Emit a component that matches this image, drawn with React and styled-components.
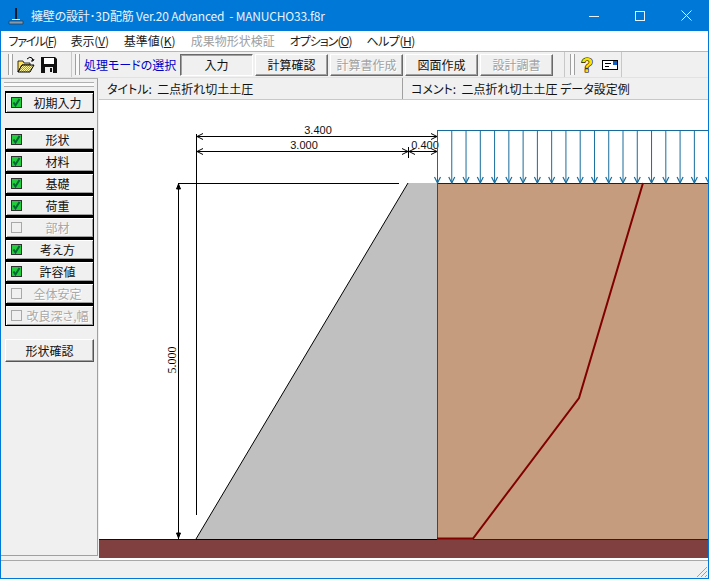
import React from 'react';
import styled, { createGlobalStyle } from 'styled-components';

const Global = createGlobalStyle`
  html, body { margin: 0; padding: 0; background: #f0f0f0; overflow: hidden; }
  #root { height: 100vh; }
  * { box-sizing: border-box; }
`;
const FONT = `"Noto Sans CJK JP", "Liberation Sans", sans-serif`;

const Window = styled.div`
  height: 579px; display: flex; flex-direction: column;
  border: 1px solid #0078d7; border-top: none;
  background: #f0f0f0; font-family: ${FONT}; font-size: 12px; color: #111;
  font-feature-settings: "palt";
`;
const TitleBar = styled.div`
  height: 31px; margin: 0 -1px; background: #0078d7; color: #e8f2fb;
  display: flex; align-items: center; padding-left: 8px; flex: none;
`;
const TitleText = styled.div`
  margin-left: 7px; font-size: 12px; white-space: nowrap; flex: 1; letter-spacing: -0.2px;
`;
const WinButton = styled.div`
  width: 46px; height: 31px; display: flex; align-items: center; justify-content: center;
`;
const MenuBar = styled.div`
  height: 20px; background: #fff; display: flex; align-items: center; flex: none; padding-bottom: 1px;
`;
const MenuItem = styled.span`
  padding: 0 7.5px; font-size: 12px; white-space: nowrap;
  letter-spacing: ${p => p.$ls || 0}px;
  color: ${p => (p.$off ? '#a0a0a0' : '#222')};
  u { text-underline-offset: 1px; }
`;
const ToolRow = styled.div`
  height: 27px; flex: none; display: flex; align-items: stretch;
  border-top: 1px solid #b8b8b8; border-bottom: 1px solid #e2e2e2;
`;
const ToolGroup = styled.div`
  display: flex; align-items: center; height: 25px; background: #f0f0f0;
  width: ${p => p.$w}px; margin-left: ${p => p.$ml || 0}px; padding-left: ${p => p.$pl || 0}px;
  border-right: 1px solid #c8c8c8;
`;
const Gripper = styled.div`
  width: 5px; height: 21px; flex: none;
  border-left: 1px solid #a0a0a0; border-right: 1px solid #a0a0a0;
  background: #fafafa;
  margin-right: ${p => p.$mr}px;
`;
const IconGap = styled.span`
  width: ${p => p.$w}px; flex: none;
`;
const ModeLabel = styled.span`
  color: #0000c8; font-size: 12px; white-space: nowrap; width: 96px; flex: none;
`;
const ModeButton = styled.div`
  width: 73px; height: 22px; margin-right: 2px; flex: none;
  display: flex; align-items: center; justify-content: center;
  font-size: 12px; background: #f0f0f0;
  color: ${p => (p.$off ? '#a0a0a0' : '#111')};
  ${p => p.$off && 'text-shadow: 1px 1px 0 #fff;'}
  border-style: solid; border-width: 1px;
  border-color: ${p => (p.$down ? '#696969 #fff #fff #696969' : '#fff #696969 #696969 #fff')};
  box-shadow: ${p => (p.$down ? 'inset 1px 1px 0 #a0a0a0' : 'inset -1px -1px 0 #a0a0a0')};
`;
const Main = styled.div`
  height: 482px; flex: none; display: flex;
`;
const Sidebar = styled.div`
  width: 97px; flex: none; height: 478px; padding: 12px 3px 0 4px;
  border-right: 1px solid #a0a0a0; border-bottom: 1px solid #a0a0a0; border-top: 1px solid #b0b0b0;
  display: flex; flex-direction: column;
  position: relative;
`;
const SideGrip = styled.div`
  position: absolute; left: 3px; right: 3px; top: 3px; height: 5px;
  border-top: 1px solid #b0b0b0; border-bottom: 1px solid #b0b0b0; background: #fafafa;
`;
const SideGroup = styled.div`
  display: flex; flex-direction: column; margin-bottom: ${p => p.$mb}px;
`;
const SideButton = styled.div`
  height: 22px; display: flex; align-items: center; padding-left: 5px;
  border: 1px solid #000; border-top-width: 2px; border-bottom-width: 1px;
  background: #f0f0f0; box-shadow: inset 1px 1px 0 #fff, inset -1px -1px 0 #a0a0a0;
  font-size: 12px;
  color: ${p => (p.$off ? '#a8a8a8' : '#111')};
  ${p => p.$off && 'text-shadow: 1px 1px 0 #fff;'}
`;
const SideLabel = styled.span`
  flex: 1; text-align: center; white-space: nowrap;
`;
const CheckWrap = styled.span`
  width: 11px; height: 11px; flex: none; display: block; line-height: 0;
`;
const PlainButton = styled.div`
  height: 23px; display: flex; align-items: center; justify-content: center;
  background: #f0f0f0; font-size: 12px;
  border: 1px solid; border-color: #fff #555 #555 #fff;
  box-shadow: inset -1px -1px 0 #a0a0a0;
`;
const Content = styled.div`
  flex: 1; min-width: 0; display: flex; flex-direction: column; padding-left: 1px;
`;
const Header = styled.div`
  height: 22px; flex: none; display: grid; grid-template-columns: 304px 1fr;
  border-bottom: 1px solid #c8c8c8;
`;
const HeaderCell = styled.div`
  display: flex; align-items: center; padding-left: 8px; font-size: 12px; white-space: pre;
  border-right: ${p => (p.$div ? '1px solid #a0a0a0' : 'none')};
`;
const Canvas = styled.div`
  height: 460px; flex: none; background: #fff; line-height: 0;
`;
const Status = styled.div`
  height: 18px; flex: none; border-top: 1px solid #a8a8a8; position: relative; background: #f0f0f0;
`;
const Sizer = styled.svg`
  position: absolute; right: 0; bottom: 0;
`;
const DimText = styled.text`
  font-family: "Liberation Sans", sans-serif; font-size: 11px; fill: #111; text-anchor: middle;
`;
const DimTextV = styled.text`
  font-family: "Liberation Serif", serif; font-size: 12px; fill: #000; text-anchor: middle;
`;
const HelpMark = styled.text`
  font-family: "Liberation Sans", sans-serif; font-weight: 700; font-size: 20px;
  fill: #f5e400; stroke: #000; stroke-width: 1.2px; paint-order: stroke; text-anchor: middle;
`;

const Check = ({ off }) => (
  <CheckWrap>
    <svg width="11" height="11" viewBox="0 0 11 11">
      {off ? (
        <rect x="0.5" y="0.5" width="10" height="10" fill="#f0f0f0" stroke="#a8a8a8" />
      ) : (
        <>
          <rect x="0.5" y="0.5" width="10" height="10" fill="#22cc3c" stroke="#303030" />
          <path d="M2.5 5.5 L4.5 8.5 L8.5 2" fill="none" stroke="#063" strokeWidth="2" />
        </>
      )}
    </svg>
  </CheckWrap>
);

const AppIcon = () => (
  <svg width="16" height="18" viewBox="0 0 16 18">
    <path d="M7 1 L9 1 L9 12 L7 12Z" fill="#1a1a2a" />
    <path d="M4 12 L12 12 L12 13 L4 13Z" fill="#dfe7ef" />
    <path d="M1 14 L15 14 L15 17 L1 17Z" fill="#8a97a6" stroke="#2a3340" strokeWidth="0.7" />
  </svg>
);

const Folder = () => (
  <svg width="18" height="18" viewBox="0 0 18 18">
    <defs>
      <pattern id="dit" width="2" height="2" patternUnits="userSpaceOnUse">
        <rect width="2" height="2" fill="#fff79a" />
        <rect width="1" height="1" fill="#b09a20" />
        <rect x="1" y="1" width="1" height="1" fill="#b09a20" />
      </pattern>
    </defs>
    <path d="M1 5 L6 5 L7 7 L13 7 L13 9 L5 9 L1 16Z" fill="#ffe25a" stroke="#000" strokeWidth="0.8" />
    <path d="M1 16 L5 9 L17 9 L13 16Z" fill="url(#dit)" stroke="#000" strokeWidth="1" />
    <path d="M10 3 Q13 0 15 2 L16 5 M14 5 L16 5 L17 3" fill="none" stroke="#000" strokeWidth="1" />
  </svg>
);
const Floppy = () => (
  <svg width="16" height="16" viewBox="0 0 16 16">
    <path d="M0 0 H14 L16 2 V16 H0Z" fill="#111" />
    <rect x="3" y="1" width="10" height="6" fill="#fff" />
    <rect x="4" y="10" width="8" height="6" fill="#eee" />
    <rect x="9" y="11" width="2" height="4" fill="#111" />
  </svg>
);
const Help = () => (
  <svg width="16" height="20" viewBox="0 0 16 20">
    <HelpMark x="8" y="17">?</HelpMark>
  </svg>
);
const Card = () => (
  <svg width="16" height="12" viewBox="0 0 16 12">
    <rect x="0.5" y="1.5" width="15" height="9" fill="#fff" stroke="#000" />
    <rect x="11" y="2" width="4" height="4" fill="#1060c0" />
    <path d="M3 4.5 H9 M3 7.5 H7" stroke="#000" />
  </svg>
);

const loads = Array.from({ length: 20 }, (_, i) => 437.5 + i * 14.27);

const ArrowH = ({ x, y, dir }) => (
  <path d={`M${x + dir * 6} ${y - 3} L${x} ${y} L${x + dir * 6} ${y + 3}`} fill="none" stroke="#000" />
);

const Diagram = () => (
  <svg width="609" height="460" viewBox="99 100 609 460">
    <rect x="99" y="539" width="610" height="19" fill="#804040" />
    <rect x="437" y="183" width="272" height="356" fill="#c69c7e" />
    <polygon points="196,539 408,183 437,183 437,539" fill="#c0c0c0" />
    <path d="M196 539 L408 183" stroke="#000" fill="none" />
    <path d="M99 539.5 H196" stroke="#000080" />
    <path d="M196 539.5 H437" stroke="#000" />
    <path d="M473 539.5 H709" stroke="#3000c0" />
    <path d="M437.5 183 V539" stroke="#90109a" />
    <path d="M437 183.5 H709" stroke="#700000" />
    <path d="M643 183 L579 398 L473 538.5 H437" fill="none" stroke="#800000" strokeWidth="2" />
    <path d="M178 183.5 H399" stroke="#000" />
    <path d="M196.5 134 V515" stroke="#000" />
    <path d="M178.5 183 V539" stroke="#000" />
    <path d="M176.5 189 L178.5 184 L180.5 189Z M176.5 533 L178.5 538 L180.5 533Z" fill="#000" stroke="#000" />
    <path d="M196 136.5 H437 M196 151.5 H437" stroke="#000" />
    <path d="M408.5 147 V158 M437.5 130 V158" stroke="#000" />
    <ArrowH x={197} y={136.5} dir={1} />
    <ArrowH x={437} y={136.5} dir={-1} />
    <ArrowH x={197} y={151.5} dir={1} />
    <ArrowH x={408} y={151.5} dir={-1} />
    <ArrowH x={409} y={151.5} dir={1} />
    <ArrowH x={437} y={151.5} dir={-1} />
    <DimText x="318" y="134">3.400</DimText>
    <DimText x="304" y="149">3.000</DimText>
    <DimText x="425" y="149">0.400</DimText>
    <DimTextV transform="translate(176 360) rotate(-90)">5.000</DimTextV>
    <path d="M437 130.5 H709" stroke="#186c9c" />
    {loads.map(x => (
      <g key={x} stroke="#186c9c" fill="none">
        <path d={`M${x} 130 V183`} />
        <path d={`M${x - 3} 177 L${x} 183 L${x + 3} 177`} strokeWidth="1.2" />
      </g>
    ))}
  </svg>
);

const sideGroup = [
  ['形状'], ['材料'], ['基礎'], ['荷重'], ['部材', true], ['考え方'], ['許容値'], ['全体安定', true], ['改良深さ,幅', true],
];

export default function App() {
  return (
    <Window>
      <Global />
      <TitleBar>
        <AppIcon />
        <TitleText>擁壁の設計･3D配筋 Ver.20 Advanced&nbsp; - MANUCHO33.f8r</TitleText>
        <WinButton>
          <svg width="10" height="10" viewBox="0 0 10 10"><path d="M0 5.5 H10" stroke="#e8f2fb" /></svg>
        </WinButton>
        <WinButton>
          <svg width="10" height="10" viewBox="0 0 10 10"><rect x="0.5" y="0.5" width="9" height="9" fill="none" stroke="#e8f2fb" /></svg>
        </WinButton>
        <WinButton>
          <svg width="11" height="11" viewBox="0 0 11 11"><path d="M0.5 0.5 L10.5 10.5 M10.5 0.5 L0.5 10.5" stroke="#e8f2fb" /></svg>
        </WinButton>
      </TitleBar>
      <MenuBar>
        <MenuItem $ls={-1.3}>ファイル(<u>F</u>)</MenuItem>
        <MenuItem $ls={-0.2}>表示(<u>V</u>)</MenuItem>
        <MenuItem>基準値(<u>K</u>)</MenuItem>
        <MenuItem $off>成果物形状検証</MenuItem>
        <MenuItem $ls={-1}>オプション(<u>O</u>)</MenuItem>
        <MenuItem $ls={-0.5}>ヘルプ(<u>H</u>)</MenuItem>
      </MenuBar>
      <ToolRow>
        <ToolGroup $w={69} $ml={2} $pl={5}>
          <Gripper $mr={4} />
          <Folder />
          <IconGap $w={6} />
          <Floppy />
        </ToolGroup>
        <ToolGroup $w={491} $ml={2} $pl={1}>
          <Gripper $mr={4} />
          <ModeLabel>処理モードの選択</ModeLabel>
          <ModeButton $down>入力</ModeButton>
          <ModeButton>計算確認</ModeButton>
          <ModeButton $off>計算書作成</ModeButton>
          <ModeButton>図面作成</ModeButton>
          <ModeButton $off>設計調書</ModeButton>
        </ToolGroup>
        <ToolGroup $w={56} $ml={1} $pl={4}>
          <Gripper $mr={4} />
          <Help />
          <IconGap $w={7} />
          <Card />
        </ToolGroup>
      </ToolRow>
      <Main>
        <Sidebar>
          <SideGrip />
          <SideGroup $mb={15}>
            <SideButton><Check /><SideLabel>初期入力</SideLabel></SideButton>
          </SideGroup>
          <SideGroup $mb={13}>
            {sideGroup.map(([t, off]) => (
              <SideButton key={t} $off={off}><Check off={off} /><SideLabel>{t}</SideLabel></SideButton>
            ))}
          </SideGroup>
          <PlainButton>形状確認</PlainButton>
        </Sidebar>
        <Content>
          <Header>
            <HeaderCell $div>タイトル:  二点折れ切土土圧</HeaderCell>
            <HeaderCell>コメント:  二点折れ切土土圧 データ設定例</HeaderCell>
          </Header>
          <Canvas><Diagram /></Canvas>
        </Content>
      </Main>
      <Status>
        <Sizer width="12" height="12" viewBox="0 0 12 12">
          <path d="M11 1 L1 11 M11 5 L5 11 M11 9 L9 11" stroke="#a0a0a0" />
        </Sizer>
      </Status>
    </Window>
  );
}
